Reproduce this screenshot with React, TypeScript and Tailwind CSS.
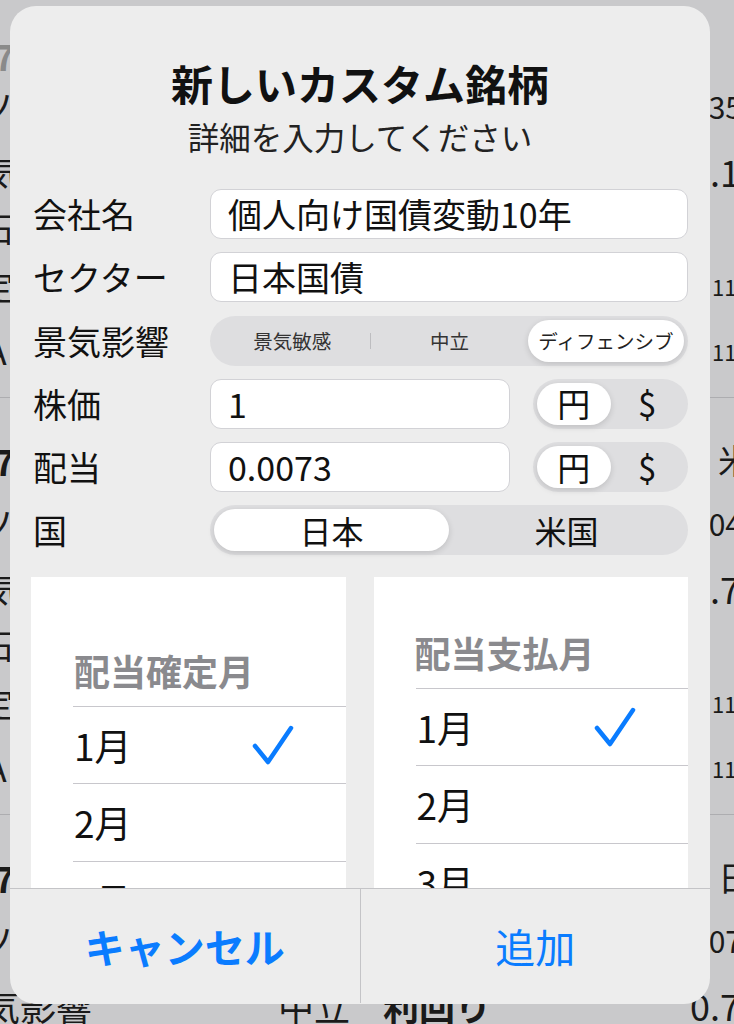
import React from "react";

function Check() {
  return (
    <svg width="42" height="40" viewBox="0 0 42 40" fill="none" className="shrink-0">
      <path d="M3 21L16 37L39 3" stroke="#0a7cff" strokeWidth="4.5" strokeLinecap="round" strokeLinejoin="round" />
    </svg>
  );
}

function Label({ children }: { children: React.ReactNode }) {
  return <div className="w-[177px] shrink-0 text-[34px] leading-none text-[#111]">{children}</div>;
}

function Field({ children, className = "" }: { children?: React.ReactNode; className?: string }) {
  return (
    <div
      className={`flex h-full items-center rounded-[11px] border border-[#d2d2d6] bg-white pl-[17px] text-[34px] leading-none text-[#111] ${className}`}
    >
      {children}
    </div>
  );
}

function Currency() {
  return (
    <div className="ml-[23px] flex h-full flex-1 items-center rounded-full bg-[#dedee0] p-[4px]">
      <div className="flex h-full flex-1 items-center justify-center rounded-full bg-white text-[33px] leading-none text-[#111] shadow-[0_2px_6px_rgba(0,0,0,0.14)]">
        円
      </div>
      <div className="flex h-full flex-1 items-center justify-center text-[33px] leading-none text-[#111]">$</div>
    </div>
  );
}

function Picker({ title, headClass, check }: { title: string; headClass: string; check: boolean }) {
  return (
    <div className="flex-1 overflow-hidden bg-white">
      <div className={headClass}>{title}</div>
      {["1月", "2月", "3月"].map((m, i) => (
        <div
          key={m}
          className="ml-[42px] flex h-[77.5px] items-center justify-between border-t border-[#c8c7cc] pl-[1px] pr-[52px]"
        >
          <span className="text-[37px] leading-none text-[#111]">{m}</span>
          {check && i === 0 ? <Check /> : null}
        </div>
      ))}
    </div>
  );
}

function BgRow({
  h,
  lc,
  left,
  rc,
  right,
}: {
  h: string;
  lc: string;
  left: React.ReactNode;
  rc?: string;
  right?: React.ReactNode;
}) {
  return (
    <div className={`flex items-center whitespace-nowrap ${h}`}>
      <div className={`shrink-0 ${lc}`}>{left}</div>
      {right ? <div className={`shrink-0 ${rc}`}>{right}</div> : null}
    </div>
  );
}

function BgGroup({
  firstGray,
  country,
  price,
  econ,
  last,
}: {
  firstGray?: boolean;
  country: string;
  price: string;
  econ: string;
  last?: boolean;
}) {
  return (
    <div className="shrink-0 border-b border-[#adadb0] pb-[14px] pt-[32px]">
      <div className={`flex h-[60px] whitespace-nowrap ${firstGray ? "items-end" : "items-center"}`}>
        <span
          className={`ml-[-70px] w-[788px] shrink-0 text-[36px] font-bold leading-none ${
            firstGray ? "text-[#8a8a8a]" : "text-[#1a1a1a]"
          }`}
        >
          8697(
        </span>
        {country ? <span className="shrink-0 text-[34px] leading-none text-[#1a1a1a]">{country}</span> : null}
      </div>
      <BgRow
        h="h-[66px]"
        lc="ml-[-20px] w-[712px] text-[34px] leading-none text-[#1a1a1a]"
        left="ソ"
        rc="text-[30px] leading-none text-[#1a1a1a]"
        right={price}
      />
      {last ? (
        <div className="flex h-[64px] items-center whitespace-nowrap text-[36px] leading-none text-[#1a1a1a]">
          <span className="ml-[-52px] w-[330px] shrink-0">景気影響</span>
          <span className="w-[105px] shrink-0">中立</span>
          <span className="w-[307px] shrink-0 font-bold">利回り</span>
          <span className="shrink-0">0.73%</span>
        </div>
      ) : (
        <div className="flex h-[64px] items-center whitespace-nowrap text-[36px] leading-none text-[#1a1a1a]">
          <span className="ml-[-52px] w-[742px] shrink-0">景気</span>
          <span className="shrink-0">{econ}</span>
        </div>
      )}
      <BgRow h="h-[50px]" lc="ml-[-20px] w-[100px] text-[34px] leading-none text-[#1a1a1a]" left="石" />
      <BgRow
        h="h-[66px]"
        lc="ml-[-20px] w-[732px] text-[34px] leading-none text-[#1a1a1a]"
        left="定"
        rc="text-[22px] leading-none text-[#1a1a1a]"
        right="11.2"
      />
      <BgRow
        h="h-[64px]"
        lc="ml-[-14px] w-[726px] text-[34px] leading-none text-[#1a1a1a]"
        left="A"
        rc="text-[22px] leading-none text-[#1a1a1a]"
        right="11.4"
      />
    </div>
  );
}

export default function App() {
  return (
    <div className="relative h-[1024px] w-[734px] overflow-hidden bg-[#c9c9cb] font-['Noto_Sans_CJK_JP',sans-serif]">
      {/* dimmed list behind the alert */}
      <div className="mt-[-19px] flex flex-col">
        <BgGroup firstGray country="" price="335" econ="2.1%" />
        <BgGroup country="米国" price="204" econ="0.73%" />
        <BgGroup country="日本" price="207" econ="0.73%" last />
      </div>

      {/* alert */}
      <div className="absolute left-[10px] top-[6px] flex h-[998px] w-[700px] flex-col overflow-hidden rounded-[26px] bg-[#ededed]">
        <div className="pt-[52px] text-center text-[42px] font-bold leading-[50px] text-[#111]">新しいカスタム銘柄</div>
        <div className="mt-[8px] text-center text-[31.5px] leading-[40px] text-[#222]">詳細を入力してください</div>

        <div className="mt-[33px] flex flex-col gap-[13.3px] pl-[23px] pr-[22px]">
          <div className="flex h-[50px] items-center">
            <Label>会社名</Label>
            <Field className="flex-1">個人向け国債変動10年</Field>
          </div>
          <div className="flex h-[50px] items-center">
            <Label>セクター</Label>
            <Field className="flex-1">日本国債</Field>
          </div>
          <div className="flex h-[50px] items-center">
            <Label>景気影響</Label>
            <div className="flex h-full flex-1 items-center rounded-full bg-[#dedee0] p-[4px]">
              <div className="flex h-full flex-1 items-center justify-center text-[19.5px] leading-none text-[#333]">
                景気敏感
              </div>
              <div className="h-[16px] w-px bg-[#bdbdc0]" />
              <div className="flex h-full flex-1 items-center justify-center text-[19.5px] leading-none text-[#333]">
                中立
              </div>
              <div className="flex h-full flex-1 items-center justify-center rounded-full bg-white text-[19.5px] leading-none text-[#222] shadow-[0_2px_6px_rgba(0,0,0,0.14)]">
                ディフェンシブ
              </div>
            </div>
          </div>
          <div className="flex h-[50px] items-center">
            <Label>株価</Label>
            <Field className="w-[300px] shrink-0">1</Field>
            <Currency />
          </div>
          <div className="flex h-[50px] items-center">
            <Label>配当</Label>
            <Field className="w-[300px] shrink-0">0.0073</Field>
            <Currency />
          </div>
          <div className="flex h-[50px] items-center">
            <Label>国</Label>
            <div className="flex h-full flex-1 items-center rounded-full bg-[#dedee0] p-[4px]">
              <div className="flex h-full flex-1 items-center justify-center rounded-full bg-white text-[32px] leading-none text-[#111] shadow-[0_2px_6px_rgba(0,0,0,0.14)]">
                日本
              </div>
              <div className="flex h-full flex-1 items-center justify-center text-[32px] leading-none text-[#111]">
                米国
              </div>
            </div>
          </div>
        </div>

        <div className="mt-[21.5px] flex h-[311.5px] gap-[28px] overflow-hidden pl-[21px] pr-[22px]">
          <Picker
            title="配当確定月"
            headClass="pb-[14px] pl-[43px] pt-[71px] text-[36px] font-bold leading-[44px] text-[#8a8a8e]"
            check
          />
          <Picker
            title="配当支払月"
            headClass="pb-[14px] pl-[41px] pt-[53px] text-[36px] font-bold leading-[44px] text-[#8a8a8e]"
            check
          />
        </div>

        <div className="flex h-[115px] shrink-0 border-t border-[#c4c4c7]">
          <div className="flex flex-1 items-center justify-center border-r border-[#c4c4c7] text-[40px] font-bold leading-none text-[#0a7cff]">
            キャンセル
          </div>
          <div className="flex flex-1 items-center justify-center text-[40px] leading-none text-[#0a7cff]">追加</div>
        </div>
      </div>
    </div>
  );
}
